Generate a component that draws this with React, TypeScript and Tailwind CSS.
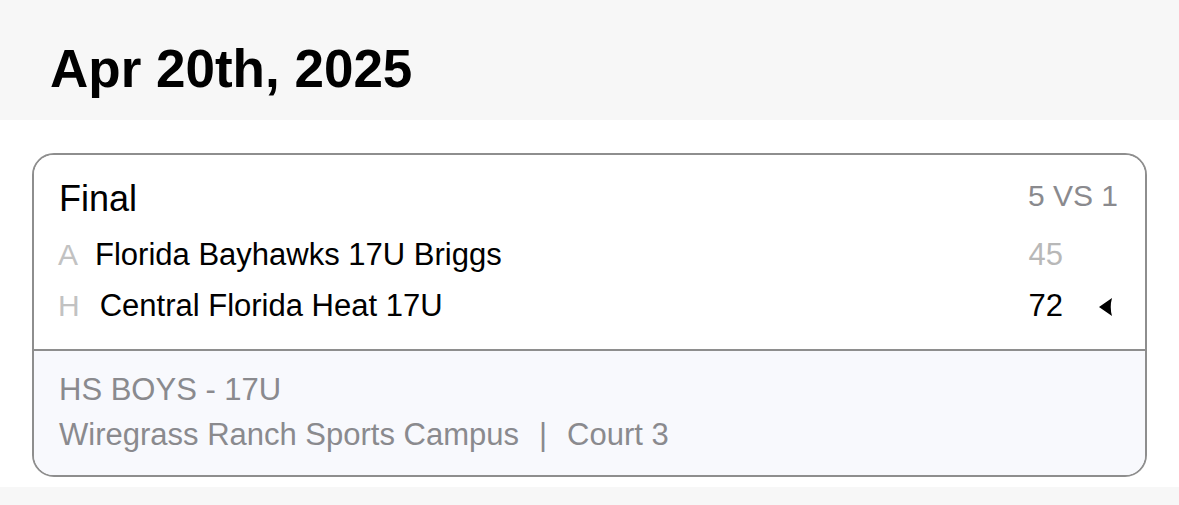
import React from "react";

const font = { fontFamily: '"Liberation Sans", Arial, sans-serif' };

function Arrow() {
  return (
    <svg
      className="block h-[18px] w-[13px] shrink-0"
      width="13"
      height="18"
      viewBox="0 0 13 18"
      aria-hidden="true"
    >
      <path d="M0 9 L13 0 Q10.5 9 13 18 Z" fill="#000" />
    </svg>
  );
}

function TeamRow({
  label,
  labelGap,
  name,
  score,
  scoreClass,
  winner,
}: {
  label: string;
  labelGap: string;
  name: string;
  score: string;
  scoreClass: string;
  winner?: boolean;
}) {
  return (
    <div className="flex h-[51px] items-center">
      <div className="flex flex-1 items-baseline leading-[51px]">
        <span className="text-[30px] text-[#c2c2c2]">{label}</span>
        <span className={`${labelGap} text-[31px] text-black`}>{name}</span>
        <span className={`ml-auto text-[31px] ${scoreClass}`}>{score}</span>
      </div>
      <div className="flex w-[55px] justify-end pr-[6px] pt-[2px]">
        {winner ? <Arrow /> : null}
      </div>
    </div>
  );
}

export default function App() {
  return (
    <div className="flex min-h-screen flex-col bg-[#f7f7f7]" style={font}>
      <div className="h-[120px] bg-[#f7f7f7] pl-[50px] pt-[39px]">
        <h1 className="text-[53px] font-bold leading-[60px] text-black">
          Apr 20th, 2025
        </h1>
      </div>
      <div className="bg-white px-[32px] pb-[10px] pt-[33px]">
        <div className="overflow-hidden rounded-[22px] border-2 border-[#8e8e8e]">
          <div className="bg-white pb-[18px] pl-[24px] pr-[27px] pt-[24px]">
            <div className="flex h-[40px] items-start">
              <span className="ml-[1px] text-[36px] leading-[40px] text-black">Final</span>
              <span className="ml-auto -mt-[3px] text-[30px] leading-[40px] text-[#8a8a8e]">
                5 VS 1
              </span>
            </div>
            <div className="mt-[10px]">
              <TeamRow
                label="A"
                labelGap="ml-[17px]"
                name="Florida Bayhawks 17U Briggs"
                score="45"
                scoreClass="text-[#b8b8b8]"
              />
              <TeamRow
                label="H"
                labelGap="ml-[20px]"
                name="Central Florida Heat 17U"
                score="72"
                scoreClass="text-black"
                winner
              />
            </div>
          </div>
          <div className="border-t-2 border-[#8e8e8e] bg-[#f8f9fd] pb-[18px] pl-[25px] pt-[16px] text-[31px] leading-[45px] text-[#8a8a8e]">
            <div>HS BOYS - 17U</div>
            <div>
              Wiregrass Ranch Sports Campus
              <span className="mx-[20px]">|</span>
              Court 3
            </div>
          </div>
        </div>
      </div>
      <div className="flex-1 bg-[#f7f7f7]" />
    </div>
  );
}
